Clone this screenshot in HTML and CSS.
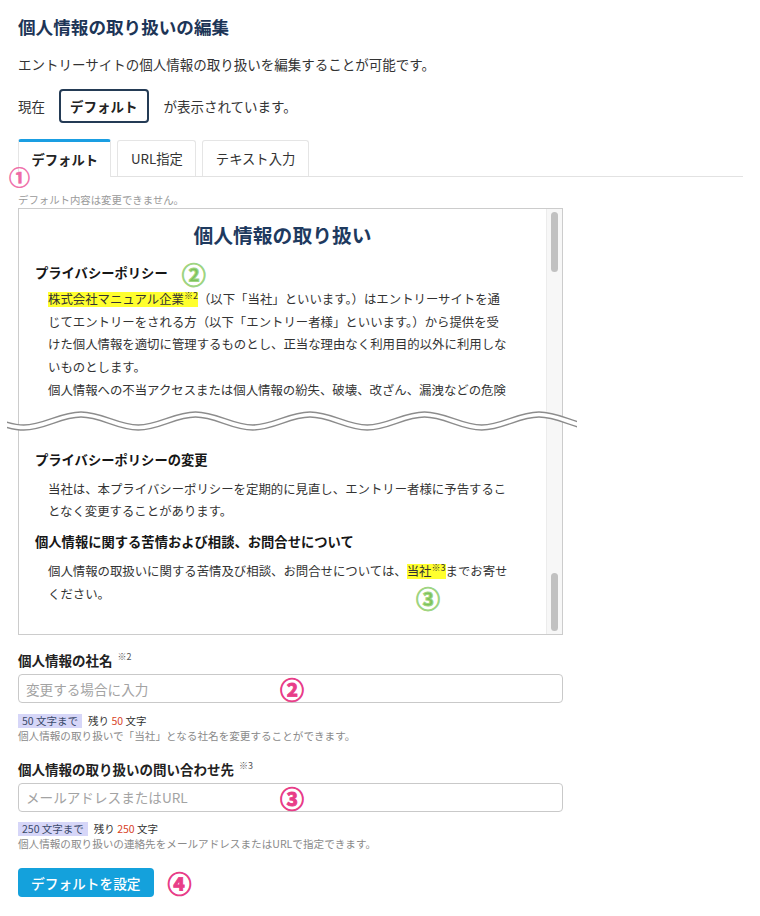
FILE: index.html
```html
<!DOCTYPE html>
<html lang="ja">
<head>
<meta charset="utf-8">
<title>個人情報の取り扱いの編集</title>
<link rel="stylesheet" href="styles.css">
</head>
<body>
<main class="page">
  <h1 class="page-title">個人情報の取り扱いの編集</h1>
  <p class="lead">エントリーサイトの個人情報の取り扱いを編集することが可能です。</p>
  <div class="current">
    <span>現在</span>
    <span class="current-badge">デフォルト</span>
    <span>が表示されています。</span>
  </div>

  <div class="tabs">
    <div class="tab tab-active">デフォルト</div>
    <div class="tab">URL指定</div>
    <div class="tab">テキスト入力</div>
    <span class="mark mark-pink-light mark-1">①</span>
  </div>
  <p class="note">デフォルト内容は変更できません。</p>

  <div class="preview">
    <div class="preview-body">
      <h2 class="preview-title">個人情報の取り扱い</h2>
      <h3 class="preview-heading">プライバシーポリシー<span class="mark mark-green mark-inline">②</span></h3>
      <p class="preview-text preview-text-first"><span class="hl">株式会社マニュアル企業<sup class="ref">※2</sup></span>（以下「当社」といいます。）はエントリーサイトを通<br>じてエントリーをされる方（以下「エントリー者様」といいます。）から提供を受<br>けた個人情報を適切に管理するものとし、正当な理由なく利用目的以外に利用しな<br>いものとします。<br>個人情報への不当アクセスまたは個人情報の紛失、破壊、改ざん、漏洩などの危険</p>

      <h3 class="preview-heading preview-heading-after-break">プライバシーポリシーの変更</h3>
      <p class="preview-text">当社は、本プライバシーポリシーを定期的に見直し、エントリー者様に予告するこ<br>となく変更することがあります。</p>

      <h3 class="preview-heading preview-heading-next">個人情報に関する苦情および相談、お問合せについて</h3>
      <p class="preview-text">個人情報の取扱いに関する苦情及び相談、お問合せについては、<span class="hl">当社<sup class="ref">※3</sup></span>までお寄せ<br>ください。</p>
    </div>
    <div class="scrollbar">
      <span class="thumb"></span>
      <span class="thumb thumb-bottom"></span>
    </div>
    <svg class="wave" width="570" height="36" viewBox="0 0 570 36" aria-hidden="true">
      <path d="M -40.5 11.5 C -19.66 11.5 -4.09 24.5 16.75 24.5 S 53.16 11.5 74 11.5 S 110.41 24.5 131.25 24.5 S 167.66 11.5 188.5 11.5 S 224.91 24.5 245.75 24.5 S 282.16 11.5 303 11.5 S 339.41 24.5 360.25 24.5 S 396.66 11.5 417.5 11.5 S 453.91 24.5 474.75 24.5 S 511.16 11.5 532 11.5 S 568.41 24.5 589.25 24.5" fill="none" stroke="#8c8c8c" stroke-width="6.5"/>
      <path d="M -40.5 11.5 C -19.66 11.5 -4.09 24.5 16.75 24.5 S 53.16 11.5 74 11.5 S 110.41 24.5 131.25 24.5 S 167.66 11.5 188.5 11.5 S 224.91 24.5 245.75 24.5 S 282.16 11.5 303 11.5 S 339.41 24.5 360.25 24.5 S 396.66 11.5 417.5 11.5 S 453.91 24.5 474.75 24.5 S 511.16 11.5 532 11.5 S 568.41 24.5 589.25 24.5" fill="none" stroke="#ffffff" stroke-width="3.6"/>
    </svg>
    <span class="mark mark-green mark-3">③</span>
  </div>

  <form class="form">
    <label class="field-label">個人情報の社名<sup class="label-ref">※2</sup></label>
    <div class="input-wrap">
      <input class="input" type="text" placeholder="変更する場合に入力">
      <span class="mark mark-pink mark-field">②</span>
    </div>
    <div class="meta"><span class="limit">50 文字まで</span><span class="remain">残り <em class="count">50</em> 文字</span></div>
    <p class="help">個人情報の取り扱いで「当社」となる社名を変更することができます。</p>

    <label class="field-label field-label-second">個人情報の取り扱いの問い合わせ先<sup class="label-ref">※3</sup></label>
    <div class="input-wrap">
      <input class="input" type="text" placeholder="メールアドレスまたはURL">
      <span class="mark mark-pink mark-field">③</span>
    </div>
    <div class="meta"><span class="limit">250 文字まで</span><span class="remain">残り <em class="count">250</em> 文字</span></div>
    <p class="help">個人情報の取り扱いの連絡先をメールアドレスまたはURLで指定できます。</p>

    <div class="actions">
      <button class="btn" type="button">デフォルトを設定</button>
      <span class="mark mark-pink">④</span>
    </div>
  </form>
</main>
</body>
</html>
```

FILE: styles.css
```css
* {
  box-sizing: border-box;
}

html,
body {
  margin: 0;
  padding: 0;
  background: #ffffff;
}

body {
  font-family: "Noto Sans CJK JP", "Noto Sans", sans-serif;
  color: #333333;
}

.page {
  padding: 15px 17px 0 18px;
}

.page-title {
  margin: 0;
  font-size: 17.6px;
  line-height: 24px;
  font-weight: 700;
  color: #1d3557;
}

.lead {
  margin: 15px 0 0;
  font-size: 13.5px;
  line-height: 20px;
}

.current {
  margin-top: 15px;
  display: flex;
  align-items: center;
  height: 34px;
  font-size: 13.5px;
}

.current-badge {
  margin: 0 15px 0 14px;
  height: 34px;
  padding: 0 9px;
  border: 2px solid #243b55;
  border-radius: 4px;
  line-height: 30px;
  font-weight: 700;
  color: #222222;
}

/* tabs */
.tabs {
  position: relative;
  margin-top: 16px;
  height: 38px;
  display: flex;
  align-items: flex-end;
  gap: 6px;
  border-bottom: 1px solid #e2e2e2;
}

.tab {
  height: 36px;
  padding: 0 12.5px;
  display: flex;
  align-items: center;
  border: 1px solid #e5e5e5;
  border-bottom: none;
  border-radius: 3px 3px 0 0;
  background: #ffffff;
  font-size: 13.3px;
  color: #333333;
}

.tab-active {
  height: 38px;
  margin-bottom: -1px;
  border-top: 3px solid #1a9ee2;
  font-weight: 700;
  color: #222222;
}

.mark {
  font-family: "Noto Sans CJK JP", sans-serif;
  line-height: 1;
}

.mark-1 {
  position: absolute;
  left: -9px;
  top: 27px;
  font-size: 21px;
  font-weight: 700;
  -webkit-text-stroke: 0.5px #ef6aa6;
}

.mark-pink-light {
  color: #ef6aa6;
}

.mark-pink {
  font-size: 24px;
  font-weight: 700;
  color: #e83d88;
  -webkit-text-stroke: 0.9px #e83d88;
}

.mark-green {
  font-size: 24px;
  font-weight: 700;
  color: #7cc25a;
  -webkit-text-stroke: 1px #9fd582;
}

.note {
  margin: 16px 0 0;
  font-size: 10.4px;
  line-height: 14px;
  color: #9a9a9a;
}

/* preview box */
.preview {
  position: relative;
  margin-top: 1px;
  width: 545px;
  height: 427px;
  display: flex;
  border: 1px solid #cccccc;
  background: #ffffff;
}

.preview-body {
  flex: 1;
  padding-top: 12px;
  overflow: hidden;
}

.preview-title {
  margin: 0;
  text-align: center;
  font-size: 19.8px;
  line-height: 28px;
  font-weight: 700;
  color: #1e3a5f;
}

.preview-heading {
  margin: 12px 0 0 16px;
  height: 22px;
  display: flex;
  align-items: center;
  font-size: 13.3px;
  font-weight: 700;
  color: #161616;
}

.preview-heading-after-break {
  margin-top: 46.5px;
}

.preview-heading-next {
  margin-top: 7.8px;
}

.mark-inline {
  position: relative;
  top: 2px;
  margin-left: 14px;
  line-height: 20px;
}

.preview-text {
  margin: 7.5px 0 0 29px;
  font-size: 12.4px;
  line-height: 22.7px;
  white-space: nowrap;
  color: #333333;
}

.preview-text-first {
  margin-top: 5px;
}

.hl {
  display: inline-block;
  line-height: 15px;
  background: #ffff2e;
}

.ref {
  font-size: 9px;
  line-height: 0;
  vertical-align: 5px;
}

.scrollbar {
  width: 16px;
  padding: 3px 0;
  display: flex;
  flex-direction: column;
  justify-content: space-between;
  align-items: center;
  background: #f7f7f7;
  border-left: 1px solid #ececec;
}

.thumb {
  display: block;
  width: 7px;
  height: 60px;
  border-radius: 4px;
  background: #c1c1c1;
}

.thumb-bottom {
  height: 58px;
}

.wave {
  position: absolute;
  left: -12px;
  top: 194px;
}

.mark-3 {
  position: absolute;
  left: 397px;
  top: 377px;
}

/* form */
.form {
  width: 545px;
  margin: 0;
}

.field-label {
  display: block;
  margin-top: 15px;
  font-size: 13.5px;
  line-height: 20px;
  font-weight: 700;
  color: #222222;
}

.field-label-second {
  margin-top: 16px;
}

.label-ref {
  margin-left: 5px;
  font-size: 9px;
  font-weight: 400;
  line-height: 0;
  vertical-align: 6px;
  color: #555555;
}

.input-wrap {
  position: relative;
  margin-top: 4px;
}

.input {
  display: block;
  width: 100%;
  height: 29px;
  margin: 0;
  padding: 0 7px;
  border: 1px solid #c9c9c9;
  border-radius: 4px;
  background: #ffffff;
  font-family: inherit;
  font-size: 13.6px;
  color: #333333;
  outline: none;
}

.input::placeholder {
  color: #a3a3a3;
}

.mark-field {
  position: absolute;
  left: 262px;
  top: 3px;
}

.meta {
  margin-top: 10.5px;
  height: 14px;
  display: flex;
  align-items: center;
  font-size: 10.5px;
  line-height: 14px;
  color: #333333;
}

.limit {
  padding: 0 4px;
  background: #d6d6f8;
  color: #3b4a6b;
}

.remain {
  margin-left: 6px;
}

.count {
  font-style: normal;
  color: #d8421f;
}

.help {
  margin: 1px 0 0;
  font-size: 10.6px;
  line-height: 14px;
  color: #8a8a8a;
}

.actions {
  margin-top: 17px;
  display: flex;
  align-items: center;
  gap: 14px;
}

.btn {
  height: 29px;
  padding: 0 13px;
  border: none;
  border-radius: 4px;
  background: #14a1dc;
  color: #ffffff;
  font-family: inherit;
  font-size: 13.7px;
  font-weight: 500;
}
```
